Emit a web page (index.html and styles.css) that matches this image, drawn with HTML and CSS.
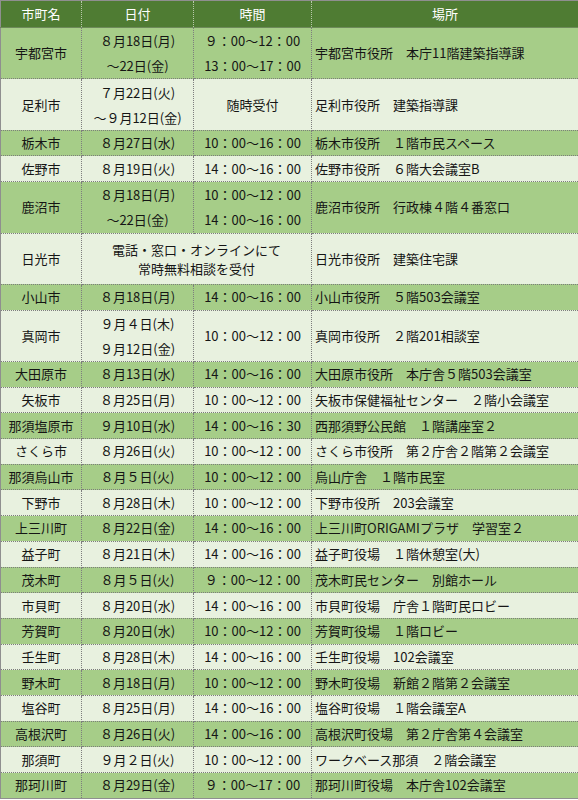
FILE: index.html
```html
<!DOCTYPE html>
<html lang="ja">
<head>
<meta charset="utf-8">
<link rel="stylesheet" href="styles.css">
</head>
<body>
<table class="sched">
<colgroup><col class="c1"><col class="c2"><col class="c3"><col class="c4"></colgroup>
<thead>
<tr class="head"><th>市町名</th><th>日付</th><th>時間</th><th>場所</th></tr>
</thead>
<tbody>
<tr class="dark dbl"><td>宇都宮市</td><td><div class="ln">８月18日(月)</div><div class="ln">～22日(金)</div></td><td><div class="ln">９：00～12：00</div><div class="ln">13：00～17：00</div></td><td class="pl">宇都宮市役所　本庁11階建築指導課</td></tr>
<tr class="light dbl"><td>足利市</td><td><div class="ln">７月22日(火)</div><div class="ln">～９月12日(金)</div></td><td>随時受付</td><td class="pl">足利市役所　建築指導課</td></tr>
<tr class="dark"><td>栃木市</td><td>８月27日(水)</td><td>10：00～16：00</td><td class="pl">栃木市役所　１階市民スペース</td></tr>
<tr class="light"><td>佐野市</td><td>８月19日(火)</td><td>14：00～16：00</td><td class="pl">佐野市役所　６階大会議室B</td></tr>
<tr class="dark dbl"><td>鹿沼市</td><td><div class="ln">８月18日(月)</div><div class="ln">～22日(金)</div></td><td><div class="ln">10：00～12：00</div><div class="ln">14：00～16：00</div></td><td class="pl">鹿沼市役所　行政棟４階４番窓口</td></tr>
<tr class="light dbl"><td>日光市</td><td colspan="2" class="note"><div>電話・窓口・オンラインにて</div><div>常時無料相談を受付</div></td><td class="pl">日光市役所　建築住宅課</td></tr>
<tr class="dark"><td>小山市</td><td>８月18日(月)</td><td>14：00～16：00</td><td class="pl">小山市役所　５階503会議室</td></tr>
<tr class="light dbl"><td>真岡市</td><td><div class="ln">９月４日(木)</div><div class="ln">９月12日(金)</div></td><td>10：00～12：00</td><td class="pl">真岡市役所　２階201相談室</td></tr>
<tr class="dark"><td>大田原市</td><td>８月13日(水)</td><td>14：00～16：00</td><td class="pl">大田原市役所　本庁舎５階503会議室</td></tr>
<tr class="light"><td>矢板市</td><td>８月25日(月)</td><td>10：00～12：00</td><td class="pl">矢板市保健福祉センター　２階小会議室</td></tr>
<tr class="dark"><td>那須塩原市</td><td>９月10日(水)</td><td>14：00～16：30</td><td class="pl">西那須野公民館　１階講座室２</td></tr>
<tr class="light"><td>さくら市</td><td>８月26日(火)</td><td>10：00～12：00</td><td class="pl">さくら市役所　第２庁舎２階第２会議室</td></tr>
<tr class="dark"><td>那須烏山市</td><td>８月５日(火)</td><td>10：00～12：00</td><td class="pl">烏山庁舎　１階市民室</td></tr>
<tr class="light"><td>下野市</td><td>８月28日(木)</td><td>10：00～12：00</td><td class="pl">下野市役所　203会議室</td></tr>
<tr class="dark"><td>上三川町</td><td>８月22日(金)</td><td>14：00～16：00</td><td class="pl">上三川町ORIGAMIプラザ　学習室２</td></tr>
<tr class="light"><td>益子町</td><td>８月21日(木)</td><td>14：00～16：00</td><td class="pl">益子町役場　１階休憩室(大)</td></tr>
<tr class="dark"><td>茂木町</td><td>８月５日(火)</td><td>９：00～12：00</td><td class="pl">茂木町民センター　別館ホール</td></tr>
<tr class="light"><td>市貝町</td><td>８月20日(水)</td><td>14：00～16：00</td><td class="pl">市貝町役場　庁舎１階町民ロビー</td></tr>
<tr class="dark"><td>芳賀町</td><td>８月20日(水)</td><td>10：00～12：00</td><td class="pl">芳賀町役場　１階ロビー</td></tr>
<tr class="light"><td>壬生町</td><td>８月28日(木)</td><td>14：00～16：00</td><td class="pl">壬生町役場　102会議室</td></tr>
<tr class="dark"><td>野木町</td><td>８月18日(月)</td><td>10：00～12：00</td><td class="pl">野木町役場　新館２階第２会議室</td></tr>
<tr class="light"><td>塩谷町</td><td>８月25日(月)</td><td>14：00～16：00</td><td class="pl">塩谷町役場　１階会議室A</td></tr>
<tr class="dark"><td>高根沢町</td><td>８月26日(火)</td><td>14：00～16：00</td><td class="pl">高根沢町役場　第２庁舎第４会議室</td></tr>
<tr class="light"><td>那須町</td><td>９月２日(火)</td><td>10：00～12：00</td><td class="pl">ワークベース那須　２階会議室</td></tr>
<tr class="dark"><td>那珂川町</td><td>８月29日(金)</td><td>９：00～17：00</td><td class="pl">那珂川町役場　本庁舎102会議室</td></tr>
</tbody>
</table>
</body>
</html>
```

FILE: styles.css
```css
html, body {
  margin: 0;
  padding: 0;
  background: #ffffff;
}

.sched {
  width: 578px;
  border-collapse: collapse;
  table-layout: fixed;
  font-family: "Noto Sans CJK JP", "Noto Sans", sans-serif;
  font-size: 13px;
  color: #151515;
  border: 1px solid #8f8f8f;
}

.c1 { width: 81px; }
.c2 { width: 112px; }
.c3 { width: 118px; }
.c4 { width: 267px; }

.sched th,
.sched td {
  padding: 0;
  text-align: center;
  vertical-align: middle;
  line-height: 16px;
  white-space: nowrap;
}

.sched td {
  border: 1px dotted #7d7d7d;
}

.head {
  height: 27px;
  background: #4f7c33;
}

.head th {
  color: #ffffff;
  font-weight: normal;
  border-left: 1px dotted #b8c9aa;
  border-bottom: 1px solid #6d8a5a;
}

.head th:first-child {
  border-left: none;
}

.sched tbody tr {
  height: 25.7px;
}

.sched tbody tr.dbl {
  height: 51.4px;
}

.dark {
  background: #a6cd88;
}

.light {
  background: #e8f1df;
}

.sched td.pl {
  text-align: left;
  padding-left: 3px;
}

.ln {
  line-height: 25px;
}

.sched td.note {
  line-height: 19px;
}
```
